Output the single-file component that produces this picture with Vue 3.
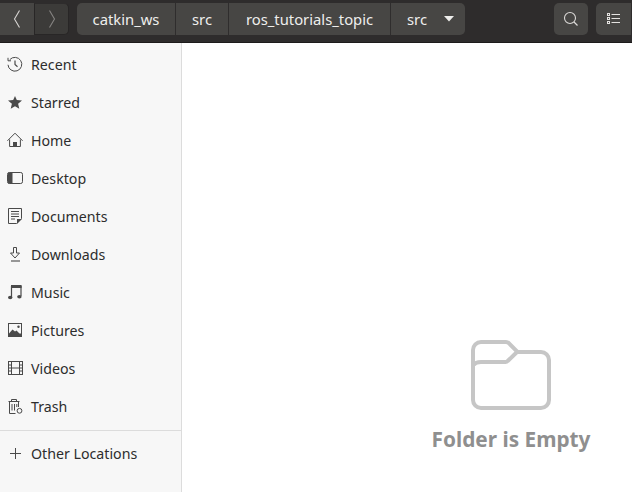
<script setup>
const crumbs = [
  { label: 'catkin_ws', cls: 'c1' },
  { label: 'src', cls: 'c2' },
  { label: 'ros_tutorials_topic', cls: 'c3' },
];
const places = [
  { label: 'Recent', icon: 'recent' },
  { label: 'Starred', icon: 'star' },
  { label: 'Home', icon: 'home' },
  { label: 'Desktop', icon: 'desktop' },
  { label: 'Documents', icon: 'docs' },
  { label: 'Downloads', icon: 'down' },
  { label: 'Music', icon: 'music' },
  { label: 'Pictures', icon: 'pics' },
  { label: 'Videos', icon: 'video' },
  { label: 'Trash', icon: 'trash' },
];
</script>

<template>
  <div class="window">
    <header class="bar">
      <div class="nav">
        <button class="nav-btn back">
          <svg width="16" height="18" viewBox="0 0 16 18"><path d="M10.500.5 5.500 9l5 8.500" fill="none" stroke="#d6d4d2" stroke-width="1.100"/></svg>
        </button>
        <button class="nav-btn fwd">
          <svg width="16" height="18" viewBox="0 0 16 18"><path d="M5.500.5 10.500 9l-5 8.500" fill="none" stroke="#868482" stroke-width="1.100"/></svg>
        </button>
      </div>
      <div class="path">
        <div v-for="c in crumbs" :key="c.cls" class="crumb" :class="c.cls">{{ c.label }}</div>
        <div class="crumb last">
          <span>src</span>
          <svg class="caret" width="10" height="6" viewBox="0 0 10 6"><path d="M0 0h10L5 5.500z" fill="#eeeeec"/></svg>
        </div>
      </div>
      <div class="spacer"></div>
      <button class="tool search">
        <svg width="16" height="16" viewBox="0 0 16 16"><circle cx="7" cy="7" r="5.500" fill="none" stroke="#dcdad8" stroke-width="1.100"/><path d="m11 11 3.500 3.500" stroke="#dcdad8" stroke-width="1.300"/></svg>
      </button>
      <button class="tool list">
        <svg width="13" height="12" viewBox="0 0 13 12">
          <g fill="none" stroke="#e4e2e0"><rect x="0.500" y="0.500" width="2" height="2"/><rect x="0.500" y="4.500" width="2" height="2"/><rect x="0.500" y="8.500" width="2" height="2"/><path d="M4.500 1.500H13M4.500 5.500H13M4.500 9.500H13"/></g>
        </svg>
      </button>
    </header>
    <div class="body">
      <aside class="side">
        <ul class="places">
          <li v-for="p in places" :key="p.label" class="row">
            <svg class="ico" width="16" height="16" viewBox="0 0 16 16">
              <g v-if="p.icon === 'recent'" fill="none" stroke="#4a4a4a" stroke-width="1">
                <path d="M2.800 3.600A6.900 6.900 0 1 1 1 8.800"/><path d="M1 1.800v3h3"/><path d="M8 4.500v4l2.500 2.200" stroke-width="1.200"/>
              </g>
              <path v-else-if="p.icon === 'star'" d="m8 2 1.800 4 5.200.5-3.900 3.300 1.200 5L8 12.200 3.700 14.800l1.200-5L1 6.500 6.200 6z" fill="#4a4a4a"/>
              <g v-else-if="p.icon === 'home'">
                <path d="M.4 8.800 8 1.200l7.600 7.600M2.600 7.500v7h10.800v-7" fill="none" stroke="#4a4a4a"/>
                <path d="M6 10h4v5H6z" fill="#4a4a4a"/>
              </g>
              <g v-else-if="p.icon === 'desktop'">
                <rect x=".5" y="2.500" width="15" height="11" rx="1.800" fill="none" stroke="#4a4a4a"/>
                <path d="M1 3.500a1 1 0 0 1 1-1h3.500v11H2a1 1 0 0 1-1-1z" fill="#4a4a4a"/>
              </g>
              <g v-else-if="p.icon === 'docs'">
                <path d="M1.500.5h13v10l-5 5h-8z" fill="none" stroke="#4a4a4a"/>
                <path d="M4 3.500h8M4 6h8M4 8.500h8M4 11h4" stroke="#4a4a4a"/>
                <path d="M10 16v-5h5z" fill="#4a4a4a"/>
              </g>
              <g v-else-if="p.icon === 'down'" fill="none" stroke="#4a4a4a">
                <path d="M6.500 1.500h3V7h3L8 12 3.500 7h3z"/><path d="M4 15h9" stroke-width="1.100"/>
              </g>
              <g v-else-if="p.icon === 'music'">
                <path d="M4.500 13V2.500h9.500V12" fill="none" stroke="#4a4a4a" stroke-width="1.200"/>
                <path d="M4 1h10.600v3H4z" fill="#4a4a4a"/>
                <ellipse cx="3.200" cy="13.500" rx="2.200" ry="1.800" fill="#4a4a4a"/><ellipse cx="12.400" cy="12.800" rx="2.200" ry="1.800" fill="#4a4a4a"/>
              </g>
              <g v-else-if="p.icon === 'pics'">
                <rect x="1.500" y="1.500" width="13" height="13" fill="none" stroke="#4a4a4a"/>
                <path d="M2 11.500 5.500 7.500 8 9.500l1.500-1 3 3zM1 11.500h14V15H1z" fill="#4a4a4a"/>
                <circle cx="11.500" cy="4.800" r="1.200" fill="#4a4a4a"/>
              </g>
              <g v-else-if="p.icon === 'video'" fill="none" stroke="#4a4a4a">
                <rect x="1.500" y="1.500" width="14" height="13"/>
                <path d="M4.500 1.500v13M12.500 1.500v13M1.500 5h3M1.500 8h3M1.500 11h3M12.500 5h3M12.500 8h3M12.500 11h3M4.500 8h8"/>
              </g>
              <g v-else-if="p.icon === 'trash'" fill="none" stroke="#4a4a4a">
                <path d="M1.500 3.500h11M4.500 3V1.500h5V3M2.500 4v11.500h6M11.500 4v5M5 6v6.500M7.500 6v6.500M9.800 6v3"/>
                <circle cx="12.500" cy="12.800" r="2.400"/>
              </g>
            </svg>
            <span>{{ p.label }}</span>
          </li>
        </ul>
        <div class="sep"></div>
        <div class="row other">
          <svg class="ico" width="16" height="16" viewBox="0 0 16 16"><path d="M8.500 3v11M3 8.500h11" stroke="#4a4a4a" stroke-width="1"/></svg>
          <span>Other Locations</span>
        </div>
      </aside>
      <main class="content">
        <div class="empty">
          <svg width="80" height="70" viewBox="0 0 80 70">
            <path d="M2 10a8 8 0 0 1 8-8h25a4 4 0 0 1 2.800 1.200L46 11.500a4 4 0 0 0 2 .5h22a8 8 0 0 1 8 8v40a8 8 0 0 1-8 8H10a8 8 0 0 1-8-8zM3 25c1-2 3-3 7-3h24.500a3 3 0 0 0 2.200-1L46 12" fill="none" stroke="#c6c6c6" stroke-width="4"/>
          </svg>
          <div class="msg">Folder is Empty</div>
        </div>
      </main>
    </div>
  </div>
</template>

<style>
html, body { margin: 0; padding: 0; overflow: hidden; background: #fff; }
</style>

<style scoped>
.window { width: 632px; height: 492px; display: flex; flex-direction: column; font-family: "Noto Sans", "Open Sans", sans-serif; overflow: hidden; }
.bar { height: 43px; flex: none; display: flex; align-items: flex-start; padding-top: 3px; box-sizing: border-box; background: #2e2c2c; border-bottom: 1px solid #1d1b1b; }
button { padding: 0; border: none; display: flex; align-items: center; justify-content: center; background: #474644; }
.nav { display: flex; height: 32px; margin-right: 8px; }
.nav-btn { height: 32px; box-sizing: border-box; }
.back { width: 34px; }
.fwd { width: 35px; border: 1px solid #282626; border-top-color: #2e2c2c; border-radius: 0 5px 5px 0; background: #3c3b39; }
.path { display: flex; height: 32px; background: #474644; border-radius: 5px; overflow: hidden; color: #eeeeec; font-size: 14.800px; }
.crumb { display: flex; align-items: center; justify-content: center; border-right: 1px solid #2f2d2d; box-sizing: border-box; }
.c1 { width: 99px; }
.c2 { width: 53px; }
.c3 { width: 162px; }
.last { width: 74px; border-right: none; padding-left: 16px; justify-content: flex-start; gap: 17px; }
.spacer { flex: 1; }
.tool { height: 32px; width: 34px; border-radius: 5px; }
.search { margin-right: 8px; }
.list { width: 35px; margin-right: 1px; border-radius: 5px 0 0 5px; }
.body { flex: 1; display: flex; min-height: 0; }
.side { width: 182px; flex: none; box-sizing: border-box; background: #f7f7f7; border-right: 1px solid #dcdcdc; color: #2d2d2d; font-size: 14.200px; padding-top: 2px; }
.places { list-style: none; margin: 0; padding: 0; }
.row { height: 38px; display: flex; align-items: center; padding-left: 7px; gap: 8px; box-sizing: border-box; }
.ico { flex: none; }
.sep { height: 1px; background: #dcdcdc; margin-top: 5px; }
.other { height: 44px; }
.content { flex: 1; position: relative; background: #fff; }
.empty { position: absolute; top: 297px; left: 250px; display: flex; flex-direction: column; align-items: center; width: 158px; }
.msg { margin-top: 15px; font-size: 20.800px; font-weight: 700; color: #8f8f8f; line-height: 28px; white-space: nowrap; }
</style>
